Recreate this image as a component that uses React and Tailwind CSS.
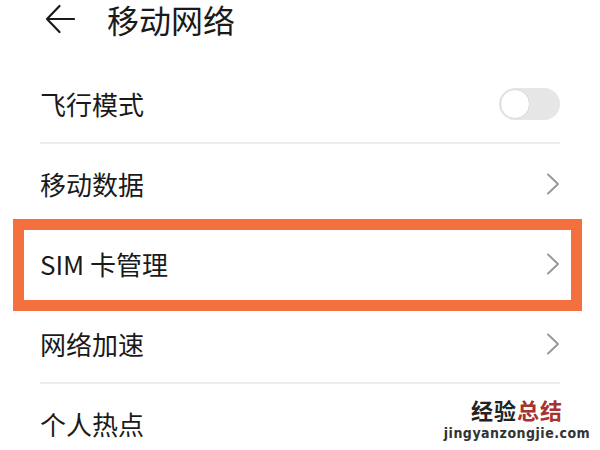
import React from 'react';

const font = { fontFamily: '"Noto Sans CJK SC", "Noto Sans", sans-serif' };

const Chevron = () => (
  <svg width="14" height="22" viewBox="0 0 14 22" fill="none" className="shrink-0">
    <path d="M2 1.5 L12 11 L2 20.5" stroke="#9a9a9a" strokeWidth="2" strokeLinecap="round" strokeLinejoin="round" />
  </svg>
);

const Toggle = () => (
  <div className="w-[61px] h-[32px] rounded-full bg-[#e6e6e6] flex items-center p-[1px]">
    <div className="w-[30px] h-[30px] rounded-full bg-white border border-[#d9d9d9]" />
  </div>
);

const Row = ({ label, right, divider, children }) => (
  <div className="relative h-[80px]">
    <div className="h-full mx-[40px] flex items-center justify-between">
      <span className="text-[26px] leading-[36px] text-[#1a1a1a]" style={font}>{label}</span>
      {right}
    </div>
    {divider && <div className="absolute bottom-0 left-[40px] right-[40px] h-[2px] bg-[#ececec]" />}
    {children}
  </div>
);

export default function App() {
  return (
    <div className="w-[600px] h-[450px] overflow-hidden bg-white relative" style={font}>
      <div className="h-[38px] flex items-center pl-[45px]">
        <svg width="30" height="30" viewBox="0 0 30 30" fill="none">
          <path d="M14.5 2 L2 15 L14.5 28 M2 15 H29" stroke="#1a1a1a" strokeWidth="2.2" strokeLinecap="round" strokeLinejoin="round" />
        </svg>
        <h1 className="ml-[32px] text-[32px] leading-[38px] text-[#1a1a1a]" style={font}>移动网络</h1>
      </div>
      <div className="mt-[26px]">
        <Row label="飞行模式" right={<Toggle />} divider />
        <Row label="移动数据" right={<Chevron />} />
        <Row label="SIM 卡管理" right={<Chevron />}>
          <div className="absolute top-[-5px] bottom-[-7px] left-[13px] right-[18px] border-[11px] border-[#f5703f]" />
        </Row>
        <Row label="网络加速" right={<Chevron />} divider />
        <Row label="个人热点" />
      </div>
      <div className="absolute left-[446px] top-[398px] w-[142px] flex flex-col items-center">
        <div className="text-[22px] font-bold leading-none tracking-[1px]" style={font}>
          <span className="text-[#222]">经验</span>
          <span className="text-[#a8322d]">总结</span>
        </div>
        <div className="mt-[6px] text-[14px] font-bold leading-none text-[#333] tracking-[0.5px]" style={{ fontFamily: '"DejaVu Sans Condensed", "Liberation Sans", sans-serif' }}>
          jingyanzongjie.com
        </div>
      </div>
    </div>
  );
}
